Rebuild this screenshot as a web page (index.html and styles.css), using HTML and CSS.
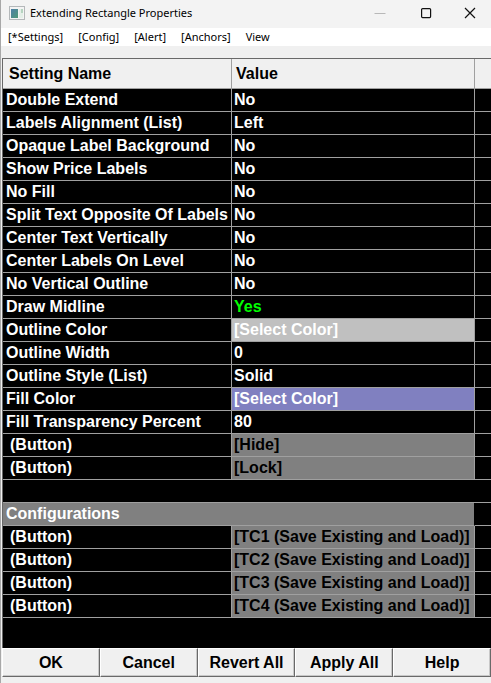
FILE: index.html
```html
<!DOCTYPE html>
<html lang="en">
<head>
    <meta charset="UTF-8">
    <meta name="viewport" content="width=device-width, initial-scale=1.0">
    <title>Extending Rectangle Properties</title>
    <link rel="stylesheet" href="styles.css">
</head>
<body>
    <div class="window">
        <header class="title-bar">
            <svg class="app-icon" viewBox="0 0 16 14">
                <defs>
                    <linearGradient id="pane" x1="0" y1="0" x2="1" y2="1">
                        <stop offset="0" stop-color="#4f80a8"/>
                        <stop offset="1" stop-color="#4f9a78"/>
                    </linearGradient>
                </defs>
                <rect x="0.5" y="0.5" width="15" height="13" fill="#f4f4f4" stroke="#b4b8ba"/>
                <rect x="2" y="3" width="7" height="9" fill="url(#pane)"/>
                <rect x="10" y="3" width="4" height="9" fill="#e4efe8"/>
                <rect x="12" y="3" width="2" height="4" fill="#b5d3c0"/>
            </svg>
            <h1>Extending Rectangle Properties</h1>
            <div class="window-controls">
                <button type="button" aria-label="Minimize" disabled>
                    <svg viewBox="0 0 12 12"><path d="M0.5 6.5h11" stroke="#b8b8b8"/></svg>
                </button>
                <button type="button" aria-label="Maximize">
                    <svg viewBox="0 0 12 12"><rect x="1.6" y="1.6" width="9" height="9" rx="1" stroke-width="1.2"/></svg>
                </button>
                <button type="button" aria-label="Close">
                    <svg viewBox="0 0 12 12"><path d="M1 1l10 10M11 1L1 11" stroke-width="1.2"/></svg>
                </button>
            </div>
        </header>

        <nav class="menu-bar">
            <button type="button">[*Settings]</button>
            <button type="button">[Config]</button>
            <button type="button">[Alert]</button>
            <button type="button">[Anchors]</button>
            <button type="button">View</button>
        </nav>

        <main class="grid">
            <table>
                <colgroup>
                    <col class="col-name">
                    <col>
                    <col class="col-end">
                </colgroup>
                <thead>
                    <tr><th scope="col">Setting Name</th><th scope="col">Value</th><td></td></tr>
                </thead>
                <tbody>
                    <tr><th scope="row">Double Extend</th><td>No</td><td></td></tr>
                    <tr><th scope="row">Labels Alignment (List)</th><td>Left</td><td></td></tr>
                    <tr><th scope="row">Opaque Label Background</th><td>No</td><td></td></tr>
                    <tr><th scope="row">Show Price Labels</th><td>No</td><td></td></tr>
                    <tr><th scope="row">No Fill</th><td>No</td><td></td></tr>
                    <tr><th scope="row">Split Text Opposite Of Labels</th><td>No</td><td></td></tr>
                    <tr><th scope="row">Center Text Vertically</th><td>No</td><td></td></tr>
                    <tr><th scope="row">Center Labels On Level</th><td>No</td><td></td></tr>
                    <tr><th scope="row">No Vertical Outline</th><td>No</td><td></td></tr>
                    <tr><th scope="row">Draw Midline</th><td class="yes">Yes</td><td></td></tr>
                    <tr><th scope="row">Outline Color</th><td class="outline-color"><button type="button">[Select Color]</button></td><td></td></tr>
                    <tr><th scope="row">Outline Width</th><td>0</td><td></td></tr>
                    <tr><th scope="row">Outline Style (List)</th><td>Solid</td><td></td></tr>
                    <tr><th scope="row">Fill Color</th><td class="fill-color"><button type="button">[Select Color]</button></td><td></td></tr>
                    <tr><th scope="row">Fill Transparency Percent</th><td>80</td><td></td></tr>
                    <tr class="action"><th scope="row">(Button)</th><td><button type="button">[Hide]</button></td><td></td></tr>
                    <tr class="action"><th scope="row">(Button)</th><td><button type="button">[Lock]</button></td><td></td></tr>
                    <tr class="blank"><td colspan="3"></td></tr>
                    <tr class="section"><th scope="rowgroup" colspan="2">Configurations</th><td></td></tr>
                    <tr class="action"><th scope="row">(Button)</th><td><button type="button">[TC1 (Save Existing and Load)]</button></td><td></td></tr>
                    <tr class="action"><th scope="row">(Button)</th><td><button type="button">[TC2 (Save Existing and Load)]</button></td><td></td></tr>
                    <tr class="action"><th scope="row">(Button)</th><td><button type="button">[TC3 (Save Existing and Load)]</button></td><td></td></tr>
                    <tr class="action"><th scope="row">(Button)</th><td><button type="button">[TC4 (Save Existing and Load)]</button></td><td></td></tr>
                </tbody>
            </table>
        </main>

        <footer class="buttons">
            <button type="button">OK</button>
            <button type="button">Cancel</button>
            <button type="button">Revert All</button>
            <button type="button">Apply All</button>
            <button type="button">Help</button>
        </footer>
    </div>
</body>
</html>
```

FILE: styles.css
```css
* {
    margin: 0;
    padding: 0;
    box-sizing: border-box;
}

body {
    background: #f0f0f0;
    color: #000;
    font-family: "Liberation Sans", Arial, sans-serif;
}

button {
    background: none;
    border: none;
    color: inherit;
    font: inherit;
}

.window {
    display: flex;
    flex-direction: column;
    min-height: 100vh;
    padding-bottom: 6px;
    border-left: 1px solid #a8a8a8;
}

/* title bar */
.title-bar {
    display: flex;
    align-items: center;
    height: 28px;
    padding-left: 8px;
    padding-bottom: 3px;
    background: #f3f3f3;
}

.app-icon {
    width: 16px;
    height: 14px;
}

.title-bar h1 {
    flex: 1;
    margin-left: 5px;
    font-family: "Noto Sans", "Open Sans", sans-serif;
    font-size: 11px;
    font-weight: 400;
    white-space: nowrap;
}

.window-controls {
    display: flex;
}

.window-controls button {
    display: flex;
    align-items: center;
    justify-content: center;
    width: 46px;
    height: 25px;
}

.window-controls button:last-child {
    width: 42px;
}

.window-controls svg {
    width: 12px;
    height: 12px;
    fill: none;
    stroke: #111;
}

/* menu */
.menu-bar {
    display: flex;
    gap: 15px;
    height: 18px;
    margin-bottom: 12px;
    padding-left: 7px;
    background: #fff;
    font-family: "Noto Sans", "Open Sans", sans-serif;
    font-size: 11px;
    line-height: 18px;
}

/* settings grid */
.grid {
    flex: 1;
    margin-left: 1px;
    background: #000;
    border-top: 1px solid #696969;
    border-left: 1px solid #696969;
}

table {
    width: 100%;
    border-collapse: separate;
    border-spacing: 0;
    table-layout: fixed;
    font-size: 16px;
    font-weight: 700;
    line-height: 20px;
}

.col-name {
    width: 229px;
}

.col-end {
    width: 16px;
}

th,
td {
    height: 23px;
    padding-left: 3px;
    border-bottom: 1px solid #a0a0a0;
    border-right: 1px solid #a0a0a0;
    color: #fff;
    text-align: left;
    white-space: nowrap;
}

td:last-child {
    border-right: none;
}

td {
    padding-left: 2px;
}

thead th,
thead td {
    height: 30px;
    padding-left: 6px;
    background: #f0f0f0;
    color: #000;
}

thead th + th {
    padding-left: 4px;
}

td button {
    display: block;
    width: 100%;
    text-align: left;
}

.yes {
    color: #00ff00;
}

.outline-color {
    background: #c0c0c0;
}

.fill-color {
    background: #8080c0;
}

.action th {
    padding-left: 7px;
}

.action td:nth-child(2) {
    background: #808080;
    color: #000;
}

.section th {
    background: #808080;
    border-right-color: #000;
}

/* bottom buttons */
.buttons {
    display: grid;
    grid-template-columns: repeat(5, 1fr);
    margin-left: 1px;
}

.buttons button {
    height: 29px;
    background: #f0f0f0;
    border: 1px solid;
    border-color: #fff #696969 #696969 #fff;
    box-shadow: inset -1px -1px 0 #c8c8c8;
    font-size: 16px;
    font-weight: 700;
}
```
